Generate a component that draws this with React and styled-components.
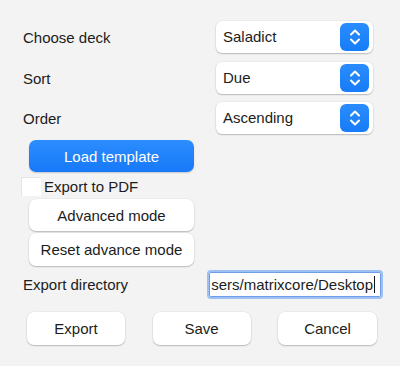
import React from "react";
import styled, { createGlobalStyle } from "styled-components";

const Global = createGlobalStyle`
  html, body { margin: 0; padding: 0; background: #f3f3f3; }
  body { font-family: "Liberation Sans", Arial, sans-serif; font-size: 15px; color: #1c1c1c; }
`;

const Page = styled.div`
  width: 400px;
  height: 366px;
  box-sizing: border-box;
  padding: 21px 0 0 23px;
  display: flex;
  flex-direction: column;
`;

const FieldGrid = styled.div`
  display: grid;
  grid-template-columns: 193px 157px;
  grid-auto-rows: 32px;
  row-gap: 8.5px;
  align-items: center;
`;

const Label = styled.span`
  font-size: 15px;
  line-height: 18px;
`;

const GridLabel = styled(Label)`
  padding-top: 2px;
`;

const SelectBox = styled.div`
  height: 32px;
  box-sizing: border-box;
  background: #fff;
  border-radius: 6px;
  box-shadow: 0 1px 1.5px rgba(0, 0, 0, 0.22), 0 0 0 0.5px rgba(0, 0, 0, 0.06);
  display: flex;
  align-items: center;
  justify-content: space-between;
  padding: 0 4px 0 7px;
`;

const Stepper = styled.div`
  width: 29px;
  height: 28px;
  border-radius: 6px;
  background: linear-gradient(#2a8cfd, #167cf8);
  display: flex;
  align-items: center;
  justify-content: center;
`;

const Chevrons = () => (
  <svg width="14" height="20" viewBox="0 0 14 20" fill="none">
    <path d="M3 7.5 L7 3.5 L11 7.5" stroke="#fff" strokeWidth="2" strokeLinecap="round" strokeLinejoin="round" />
    <path d="M3 12.5 L7 16.5 L11 12.5" stroke="#fff" strokeWidth="2" strokeLinecap="round" strokeLinejoin="round" />
  </svg>
);

const Select = ({ value }) => (
  <SelectBox>
    <Label>{value}</Label>
    <Stepper>
      <Chevrons />
    </Stepper>
  </SelectBox>
);

const Button = styled.button`
  font-family: "Liberation Sans", Arial, sans-serif;
  font-size: 15px;
  width: ${(p) => p.$w || 165}px;
  height: ${(p) => p.$h || 32}px;
  margin: ${(p) => p.$m || "0"};
  border: none;
  border-radius: 7px;
  padding: 0;
  color: ${(p) => (p.$primary ? "#fff" : "#1c1c1c")};
  background: ${(p) => (p.$primary ? "linear-gradient(#2b8dfd, #1779f8)" : "#fff")};
  box-shadow: ${(p) =>
    p.$primary
      ? "0 1px 1.5px rgba(0,0,0,0.18)"
      : "0 1px 1.5px rgba(0,0,0,0.22), 0 0 0 0.5px rgba(0,0,0,0.06)"};
  flex-shrink: 0;
`;

const CheckRow = styled.label`
  display: flex;
  align-items: center;
  height: 19px;
  margin: 5px 0 3px -2px;
  gap: 3px;
`;

const CheckBox = styled.span`
  width: 20px;
  height: 19px;
  background: #fff;
  box-shadow: inset 1px 1px 0 #e4e4e4;
`;

const DirRow = styled.div`
  display: flex;
  align-items: center;
  margin-top: 4px;
`;

const DirLabel = styled(Label)`
  width: 184px;
`;

const PathField = styled.div`
  width: 176px;
  height: 29px;
  box-sizing: border-box;
  border-radius: 4px;
  border: 2px solid #9cc0f4;
  background: #fff;
  box-shadow: inset 0 0 0 1px #6f9ee6;
  display: flex;
  align-items: center;
  justify-content: flex-end;
  overflow: hidden;
  white-space: nowrap;
  padding: 0 6px 0 2px;
`;

const Caret = styled.span`
  width: 1px;
  height: 17px;
  background: #111;
  margin-left: 1px;
  flex-shrink: 0;
`;

const ActionRow = styled.div`
  display: flex;
  gap: 27.5px;
  margin: 13px 0 0 4px;
`;

export default function App() {
  return (
    <>
      <Global />
      <Page>
        <FieldGrid>
          <GridLabel>Choose deck</GridLabel>
          <Select value="Saladict" />
          <GridLabel>Sort</GridLabel>
          <Select value="Due" />
          <GridLabel>Order</GridLabel>
          <Select value="Ascending" />
        </FieldGrid>
        <Button $primary $m="6px 0 0 6px">Load template</Button>
        <CheckRow>
          <CheckBox />
          <Label>Export to PDF</Label>
        </CheckRow>
        <Button $m="0 0 0 6px">Advanced mode</Button>
        <Button $m="2px 0 0 6px" $h={33}>Reset advance mode</Button>
        <DirRow>
          <DirLabel>Export directory</DirLabel>
          <PathField>
            <span>sers/matrixcore/Desktop</span>
            <Caret />
          </PathField>
        </DirRow>
        <ActionRow>
          <Button $w={98} $h={33}>Export</Button>
          <Button $w={98} $h={33}>Save</Button>
          <Button $w={99} $h={33}>Cancel</Button>
        </ActionRow>
      </Page>
    </>
  );
}
